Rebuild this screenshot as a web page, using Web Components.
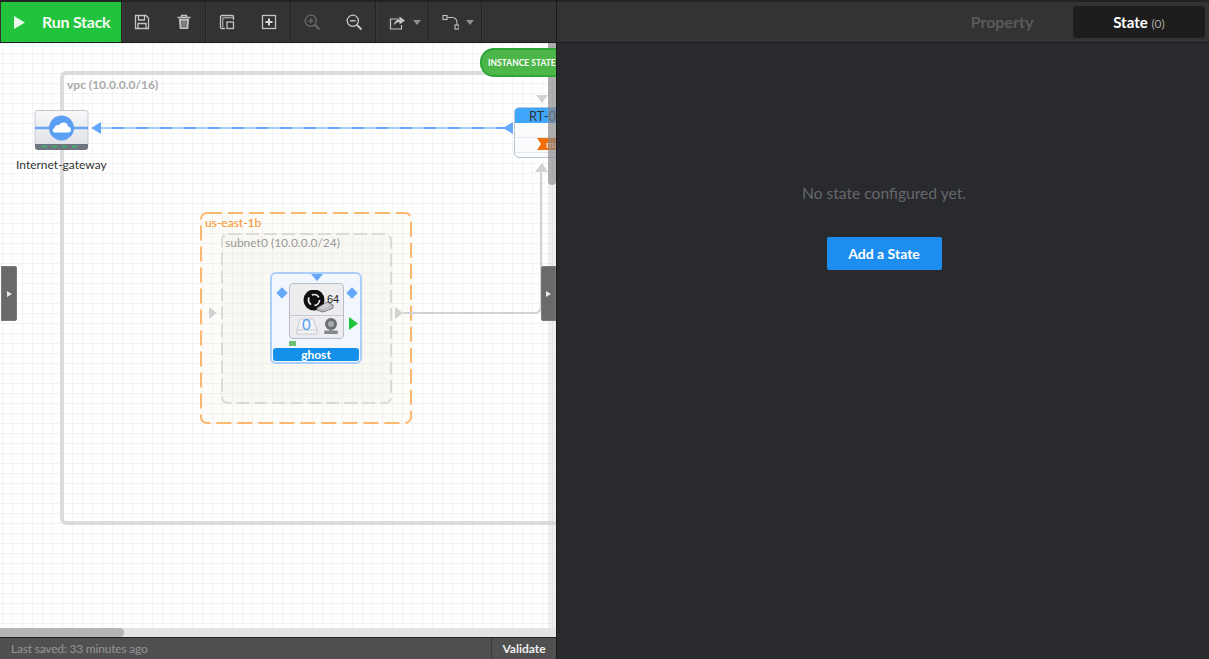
<!DOCTYPE html>
<html>
<head>
<meta charset="utf-8">
<title>Run Stack</title>
<style>
  html, body { margin: 0; height: 100%; background: #292a2e; overflow: hidden; }
  body { font-family: 'Lato', sans-serif; }
</style>
</head>
<body>
<app-shell>
  <ide-toolbar slot="toolbar"></ide-toolbar>
  <stack-canvas slot="canvas"></stack-canvas>
  <status-bar slot="status"></status-bar>
  <state-panel slot="panel"></state-panel>
</app-shell>

<script>
class AppShell extends HTMLElement {
  connectedCallback() {
    this.attachShadow({ mode: 'open' });
    this.shadowRoot.innerHTML = `
      <style>
        :host { display: grid; grid-template-columns: 556px 1fr; width: 1209px; height: 659px; background: #292a2e; }
        .left { display: flex; flex-direction: column; height: 659px; min-width: 0; }
        .panel { border-left: 1px solid #1b1b1d; display: flex; min-width: 0; }
      </style>
      <div class="left">
        <slot name="toolbar"></slot>
        <slot name="canvas"></slot>
        <slot name="status"></slot>
      </div>
      <div class="panel"><slot name="panel"></slot></div>
    `;
  }
}

const ICONS = {
  play: '<path d="M0 0 L11 6.5 L0 13 Z" fill="#fff" opacity=".9"/>',
  save: '<path d="M1.5 1.5 H12 L14.5 4 V14.5 H1.5 Z M4.5 1.5 V6 H10.5 V1.5 M4 14.5 V9.5 H12 V14.5" fill="none" stroke="#c4c4c4" stroke-width="1.3"/>',
  trash: '<path d="M1.5 3.5 H14.5 M5.5 3.5 V1.5 H10.5 V3.5" fill="none" stroke="#c4c4c4" stroke-width="1.3"/><path d="M2.8 4.8 H13.2 L12.2 15 H3.8 Z" fill="#c4c4c4"/><path d="M5.8 6.5 L6.2 13.5 M8 6.5 V13.5 M10.2 6.5 L9.8 13.5" stroke="#333" stroke-width="1"/>',
  copy: '<path d="M6 14.5 H3 Q1.5 14.5 1.5 13 V3 Q1.5 1.5 3 1.5 H13 Q14.5 1.5 14.5 3 V6" fill="none" stroke="#c4c4c4" stroke-width="1.3"/><path d="M3.8 13 V3.8 H14" fill="none" stroke="#c4c4c4" stroke-width="1"/><rect x="8" y="8" width="6.5" height="6.5" fill="none" stroke="#c4c4c4" stroke-width="1.3"/>',
  add: '<rect x="1.5" y="1.5" width="13" height="13" fill="none" stroke="#c4c4c4" stroke-width="1.3"/><path d="M8 4.5 V11.5 M4.5 8 H11.5" stroke="#d8d8d8" stroke-width="2"/>',
  zoomIn: '<circle cx="6.8" cy="6.8" r="5.6" fill="none" stroke="#6a6a6a" stroke-width="1.3"/><path d="M6.8 4 V9.6 M4 6.8 H9.6" stroke="#6a6a6a" stroke-width="1.2"/><path d="M11 11 L15.5 15.5" stroke="#6a6a6a" stroke-width="2"/>',
  zoomOut: '<circle cx="6.8" cy="6.8" r="5.6" fill="none" stroke="#c8c8c8" stroke-width="1.3"/><path d="M4 6.8 H9.6" stroke="#c8c8c8" stroke-width="1.4"/><path d="M11 11 L15.5 15.5" stroke="#c8c8c8" stroke-width="2"/>',
  share: '<path d="M10 5 H1.5 V15 H12.5 V11" fill="none" stroke="#c4c4c4" stroke-width="1.2"/><path d="M4.5 11.5 Q5.5 6 10.5 5.5 V2.5 L16 6.5 L10.5 10.5 V8 Q7 8 4.5 11.5 Z" fill="#c4c4c4"/>',
  link: '<rect x="1" y="1.5" width="4" height="4" fill="none" stroke="#c4c4c4" stroke-width="1.1"/><rect x="13" y="11" width="4" height="4" fill="none" stroke="#c4c4c4" stroke-width="1.1"/><path d="M5 3.5 H10 Q15 3.5 15 9 V11" fill="none" stroke="#c4c4c4" stroke-width="1.1"/>'
};

class ToolIcon extends HTMLElement {
  connectedCallback() {
    this.attachShadow({ mode: 'open' });
    const caret = this.hasAttribute('caret');
    this.shadowRoot.innerHTML = `
      <style>
        :host { display: flex; align-items: center; justify-content: center; gap: 7px; box-sizing: border-box; width: ${this.getAttribute('w') || 42}px; height: 100%; padding-left: ${caret ? 6 : 0}px; }
        svg { display: block; }
        i { width: 0; height: 0; border: 4px solid transparent; border-top: 5px solid #8f8f8f; border-bottom: 0; }
      </style>
      <svg width="17" height="17" viewBox="0 0 17 17">${ICONS[this.getAttribute('name')]}</svg>
      ${caret ? '<i></i>' : ''}
    `;
  }
}

class IdeToolbar extends HTMLElement {
  connectedCallback() {
    this.attachShadow({ mode: 'open' });
    this.shadowRoot.innerHTML = `
      <style>
        :host { display: flex; flex: none; height: 40px; box-sizing: content-box; background: #333; border-top: 2px solid #232323; border-bottom: 1px solid #1c1c1c; }
        .run { display: flex; align-items: center; width: 120px; margin-left: 1px; background: #22c33c; color: #f2fbf2; font-weight: 700; font-size: 16px; letter-spacing: -.25px; flex: none; }
        .run svg { margin: 0 17px 0 13px; }
        .run span { margin-top: -2px; }
        .group { display: flex; flex: none; border-left: 1px solid #232323; box-shadow: inset 1px 0 0 #3a3a3a; box-sizing: border-box; }
        .rest { flex: 1; }
      </style>
      <div class="run"><svg width="11" height="13" viewBox="0 0 11 13">${ICONS.play}</svg><span>Run Stack</span></div>
      <div class="group" style="width:84px"><tool-icon name="save"></tool-icon><tool-icon name="trash"></tool-icon></div>
      <div class="group" style="width:85px"><tool-icon name="copy"></tool-icon><tool-icon name="add"></tool-icon></div>
      <div class="group" style="width:85px"><tool-icon name="zoomIn"></tool-icon><tool-icon name="zoomOut"></tool-icon></div>
      <div class="group" style="width:53px"><tool-icon name="share" w="53" caret></tool-icon></div>
      <div class="group" style="width:53px"><tool-icon name="link" w="53" caret></tool-icon></div>
      <div class="group rest"></div>
    `;
  }
}

// dash attribute draws the outline as an svg rect, css dashed is too short here
class CanvasGroup extends HTMLElement {
  connectedCallback() {
    this.attachShadow({ mode: 'open' });
    const dash = this.getAttribute('dash');
    this.shadowRoot.innerHTML = `
      <style>
        :host { position: absolute; box-sizing: border-box; left: var(--x); top: var(--y); width: var(--w); height: var(--h);
                border: var(--bw, 0) solid var(--bc); border-radius: 6px; background: var(--bg, transparent); }
        span { position: relative; display: block; padding: var(--lp, 4px 0 0 5px); font-size: 12px; line-height: 14px; font-weight: var(--fw, 400); color: var(--lc); white-space: nowrap; }
        svg { position: absolute; left: 0; top: 0; width: 100%; height: 100%; }
        rect { x: 1px; y: 1px; width: calc(100% - 2px); height: calc(100% - 2px); fill: none; stroke: var(--bc); stroke-width: 2; }
      </style>
      ${dash ? `<svg><rect rx="6" stroke-dasharray="${dash}"></rect></svg>` : ''}
      <span><slot></slot></span>
    `;
  }
}

class GatewayNode extends HTMLElement {
  connectedCallback() {
    this.attachShadow({ mode: 'open' });
    this.shadowRoot.innerHTML = `
      <style>
        :host { position: absolute; left: 16px; top: 67px; width: 90px; color: #333; font-size: 12px; text-align: center; }
        svg { display: block; margin: 0 0 7px 18px; }
        span { display: block; width: 90px; line-height: 14px; white-space: nowrap; }
      </style>
      <svg width="56" height="41" viewBox="0 0 56 41">
        <defs><linearGradient id="g" x1="0" x2="0" y1="0" y2="1"><stop offset="0" stop-color="#f8f8fa"/><stop offset="1" stop-color="#dfe1e6"/></linearGradient></defs>
        <rect x="1" y="0.5" width="53" height="36" rx="2" fill="url(#g)" stroke="#c2c8d2"/>
        <path d="M1 34 H54 L54 37 Q54 40 51 40 H4 Q1 40 1 37 Z" fill="#6e7580"/>
        <path d="M8 36.500 h5 M18 36.500 h5 M28 36.500 h5 M38 36.500 h5" stroke="#2fbf66" stroke-width="1.400"/>
        <path d="M1 18 H54" stroke="#6ea5f3" stroke-width="2.400"/>
        <circle cx="27.500" cy="18" r="12.500" fill="#5b9ff2"/>
        <path d="M20.500 22.500 H34 Q37 22.500 37 19.500 Q37 17 34 16.500 Q33.500 12.500 29 12.500 Q26 12.500 25 15 Q21 14.500 20.500 18 Q18 19.500 18.800 21 Q19.300 22.500 20.500 22.500 Z" fill="#fff"/>
      </svg>
      <span>Internet-gateway</span>
    `;
  }
}

class RouteTable extends HTMLElement {
  connectedCallback() {
    this.attachShadow({ mode: 'open' });
    this.shadowRoot.innerHTML = `
      <style>
        :host { position: absolute; left: 514px; top: 64px; width: 60px; height: 51px; box-sizing: border-box; border: 1px solid #b8c4d8; border-radius: 5px; background: #fafbfd; overflow: hidden; color: #333; font-size: 13px; }
        .head { height: 15px; line-height: 16px; background: #3ea6fb; padding-left: 14px; white-space: nowrap; }
        .row { border-bottom: 1px solid #e6e8ec; height: 14px; }
        .tag { position: absolute; left: 22px; top: 30px; width: 40px; height: 12px; line-height: 12px; background: #f26d0a; color: #fff; font-size: 10px; padding-left: 9px; box-sizing: border-box; clip-path: polygon(0 0,100% 0,100% 100%,0 100%,4px 50%); }
      </style>
      <div class="head">RT-0</div>
      <div class="row"></div>
      <div class="row"></div>
      <div class="tag">main</div>
    `;
  }
}

class InstanceNode extends HTMLElement {
  connectedCallback() {
    this.attachShadow({ mode: 'open' });
    this.shadowRoot.innerHTML = `
      <style>
        :host { position: absolute; left: 270px; top: 229px; width: 92px; height: 92px; box-sizing: border-box; border: 2px solid #abcefb; border-radius: 6px; background: #f2f7fd; font-size: 12px; }
        .card { position: absolute; left: 17px; top: 9px; width: 55px; height: 56px; box-sizing: border-box; border: 1px solid #b9bdc7; border-radius: 4px; background: #ededf0; }
        .sep { position: absolute; left: 0; right: 0; top: 31px; border-top: 1px solid #c6c9d0; }
        .bit { position: absolute; left: 37px; top: 9px; font: 11px 'Liberation Sans', sans-serif; color: #222; line-height: 12px; }
        .zero { position: absolute; left: 12px; top: 33px; font-size: 15px; line-height: 15px; color: #5b9ff2; }
        .name { position: absolute; left: 1px; right: 1px; bottom: 1px; height: 13px; border-radius: 3px; background: #1590ea; color: #fff; font-weight: 700; text-align: center; line-height: 13px; }
        svg { position: absolute; }
        .port { position: absolute; width: 8px; height: 8px; background: #66a8f7; transform: rotate(45deg); }
      </style>
      <div class="card">
        <svg style="left:13px;top:6px" width="36" height="25" viewBox="0 0 36 25">
          <circle cx="11" cy="10" r="10.500" fill="#111"/>
          <circle cx="11" cy="10" r="5.500" fill="none" stroke="#eee" stroke-width="1.700" stroke-dasharray="8 3.500"/>
          <path d="M14 18 L24 12 L30 15 L30 18 L20 22 L14 20 Z" fill="#d0d2d5" stroke="#666" stroke-width=".9"/>
          <path d="M14 18 L20 20 L30 15 M20 20 V22" fill="none" stroke="#8b8e92" stroke-width=".6"/>
        </svg>
        <span class="bit">64</span>
        <div class="sep"></div>
        <svg style="left:6px;top:34px" width="22" height="18" viewBox="0 0 22 18">
          <path d="M4 1 H17 L21 12 V16 H1 V12 Z" fill="#f3f4f6" stroke="#c6cad2"/>
          <path d="M1 12 H21" stroke="#c6cad2"/>
        </svg>
        <span class="zero">0</span>
        <svg style="left:33px;top:34px" width="16" height="17" viewBox="0 0 16 17">
          <circle cx="8" cy="6" r="6" fill="#6c6f73"/><circle cx="8" cy="6" r="3" fill="#a9abaf"/>
          <path d="M6.500 11 H9.500 V12.500 H14.500 Q15 15 14.500 16 H1.500 Q1 15 1.500 12.500 H6.500 Z" fill="#85888c"/>
        </svg>
      </div>
      <svg style="left:39px;top:0" width="12" height="7" viewBox="0 0 12 7"><path d="M0 0 H12 L6 7 Z" fill="#66a8f7"/></svg>
      <div class="port" style="left:6px;top:15px"></div>
      <div class="port" style="left:76px;top:15px"></div>
      <svg style="left:77px;top:43px" width="9" height="13" viewBox="0 0 9 13"><path d="M0 0 L9 6.500 L0 13 Z" fill="#22c33c"/></svg>
      <div style="position:absolute;left:17px;top:67px;width:7px;height:5px;background:#6fbf77"></div>
      <div class="name">ghost</div>
    `;
  }
}

class SidePull extends HTMLElement {
  connectedCallback() {
    this.attachShadow({ mode: 'open' });
    this.shadowRoot.innerHTML = `
      <style>
        :host { position: absolute; top: 223px; height: 55px; background: #6a6a6a; display: flex; align-items: center; justify-content: center; box-shadow: inset 0 0 0 1px #7a7a7a; }
        i { width: 0; height: 0; border: 3.500px solid transparent; border-left: 5px solid #e8e8e8; border-right: 0; }
      </style>
      <i></i>
    `;
  }
}

class StackCanvas extends HTMLElement {
  connectedCallback() {
    this.attachShadow({ mode: 'open' });
    this.shadowRoot.innerHTML = `
      <style>
        :host { display: block; position: relative; flex: 1; width: 556px; overflow: hidden; background-color: #fff;
          background-image: linear-gradient(#f3f3f3 1px, transparent 1px), linear-gradient(90deg, #f3f3f3 1px, transparent 1px);
          background-size: 10px 10px; background-position: 2px 0; }
        .state { position: absolute; left: 480px; top: 5px; width: 76px; height: 29px; box-sizing: border-box; border: 2px solid #2da538; border-right: 0; border-radius: 14px 0 0 14px; background: #4cb648; color: #fff; font-size: 8.5px; font-weight: 700; line-height: 26px; padding-left: 6px; white-space: nowrap; }
        svg.wires { position: absolute; left: 0; top: 0; }
        .vtrack { position: absolute; right: 0; top: 0; width: 8px; bottom: 9px; background: rgba(210,210,210,.35); }
        .vthumb { position: absolute; right: 0; top: 0; width: 8px; height: 142px; background: rgba(110,110,110,.5); border-radius: 0 0 4px 4px; }
        .htrack { position: absolute; left: 0; right: 0; bottom: 0; height: 9px; background: #e4e4e4; }
        .hthumb { position: absolute; left: 0; bottom: 0; width: 124px; height: 9px; background: #b5b5b5; border-radius: 0 4px 4px 0; }
      </style>
      <canvas-group style="--x:60px;--y:28px;--w:560px;--h:454px;--bw:4px;--bc:#dcdcdc;--lc:#aaa;--fw:700;--lp:3px 0 0 3px">vpc (10.0.0.0/16)</canvas-group>
      <canvas-group dash="15 6" style="--x:200px;--y:169px;--w:212px;--h:212px;--bc:#fbb96f;--bg:rgba(240,235,215,.14);--lc:#f7931e;--lp:4px 0 0 5px">us-east-1b</canvas-group>
      <canvas-group dash="13 5" style="--x:221px;--y:190px;--w:171px;--h:171px;--bc:#dadada;--bg:rgba(240,235,215,.18);--lc:#9a9a9a;--lp:3px 0 0 4px">subnet0 (10.0.0.0/24)</canvas-group>
      <svg class="wires" width="556" height="595" viewBox="0 43 556 595">
        <path d="M100 128 H505" stroke="#66a8f7" stroke-width="2"/>
        <path d="M100 128 H505" stroke="#a9cdfb" stroke-width="2" stroke-dasharray="12 12"/>
        <path d="M91 128 L101 122 V134 Z M513 122 V134 L503 128 Z" fill="#66a8f7"/>
        <path d="M403 313 H534 Q541 313 541 306 V172" fill="none" stroke="#d2d2d2" stroke-width="2"/>
        <path d="M536 95 H548 L542 103 Z M535 172 H548 L542 163 Z M209 307 V319 L217 313 Z M395 307 V319 L403 313 Z" fill="#d2d2d2"/>
      </svg>
      <gateway-node></gateway-node>
      <route-table></route-table>
      <instance-node></instance-node>
      <div class="vtrack"></div><div class="vthumb"></div>
      <div class="state">INSTANCE STATE</div>
      <side-pull style="left:1px;width:16px;border-radius:0 3px 3px 0"></side-pull>
      <side-pull style="left:541px;width:15px;border-radius:3px 0 0 3px"></side-pull>
      <div class="htrack"></div><div class="hthumb"></div>
    `;
  }
}

class StatusBar extends HTMLElement {
  connectedCallback() {
    this.attachShadow({ mode: 'open' });
    this.shadowRoot.innerHTML = `
      <style>
        :host { display: flex; flex: none; height: 21px; background: #505050; border-top: 1px solid #222; font-size: 12px; color: #949494; }
        .saved { flex: 1; padding-left: 11px; line-height: 22px; letter-spacing: -.2px; }
        .validate { width: 64px; text-align: center; line-height: 22px; border-left: 1px solid #3a3a3a; color: #eee; font-weight: 700; }
      </style>
      <div class="saved">Last saved: 33 minutes ago</div>
      <div class="validate">Validate</div>
    `;
  }
}

class StatePanel extends HTMLElement {
  connectedCallback() {
    this.attachShadow({ mode: 'open' });
    this.shadowRoot.innerHTML = `
      <style>
        :host { display: flex; flex-direction: column; flex: 1; min-width: 0; }
        .tabs { display: flex; flex: none; justify-content: flex-end; align-items: flex-start; height: 43px; box-sizing: border-box; padding: 4px 4px 0 0; background: #333; border-bottom: 1px solid #1c1c1c; border-top: 2px solid #232323; }
        .tab { width: 132px; text-align: center; line-height: 32px; height: 32px; border-radius: 3px; }
        .off { color: #5a5a5a; font-size: 16px; font-weight: 700; margin-right: 5px; }
        .on { background: #1d1d1d; color: #fff; font-weight: 700; font-size: 15px; }
        .on small { color: #a9a9a9; font-size: 12px; font-weight: 400; }
        .body { display: flex; flex-direction: column; align-items: center; flex: 1; padding-left: 2px; }
        p { margin: 141px 0 0; color: #66676b; font-size: 15.6px; line-height: 18px; }
        button { margin-top: 35px; width: 115px; height: 33px; border: 0; border-radius: 2px; background: #1d8def; color: #fff; font: 700 14px 'Lato', sans-serif; }
      </style>
      <div class="tabs"><div class="tab off">Property</div><div class="tab on">State <small>(0)</small></div></div>
      <div class="body">
        <p>No state configured yet.</p>
        <button>Add a State</button>
      </div>
    `;
  }
}

customElements.define('app-shell', AppShell);
customElements.define('tool-icon', ToolIcon);
customElements.define('ide-toolbar', IdeToolbar);
customElements.define('canvas-group', CanvasGroup);
customElements.define('gateway-node', GatewayNode);
customElements.define('route-table', RouteTable);
customElements.define('instance-node', InstanceNode);
customElements.define('side-pull', SidePull);
customElements.define('stack-canvas', StackCanvas);
customElements.define('status-bar', StatusBar);
customElements.define('state-panel', StatePanel);
</script>
</body>
</html>
